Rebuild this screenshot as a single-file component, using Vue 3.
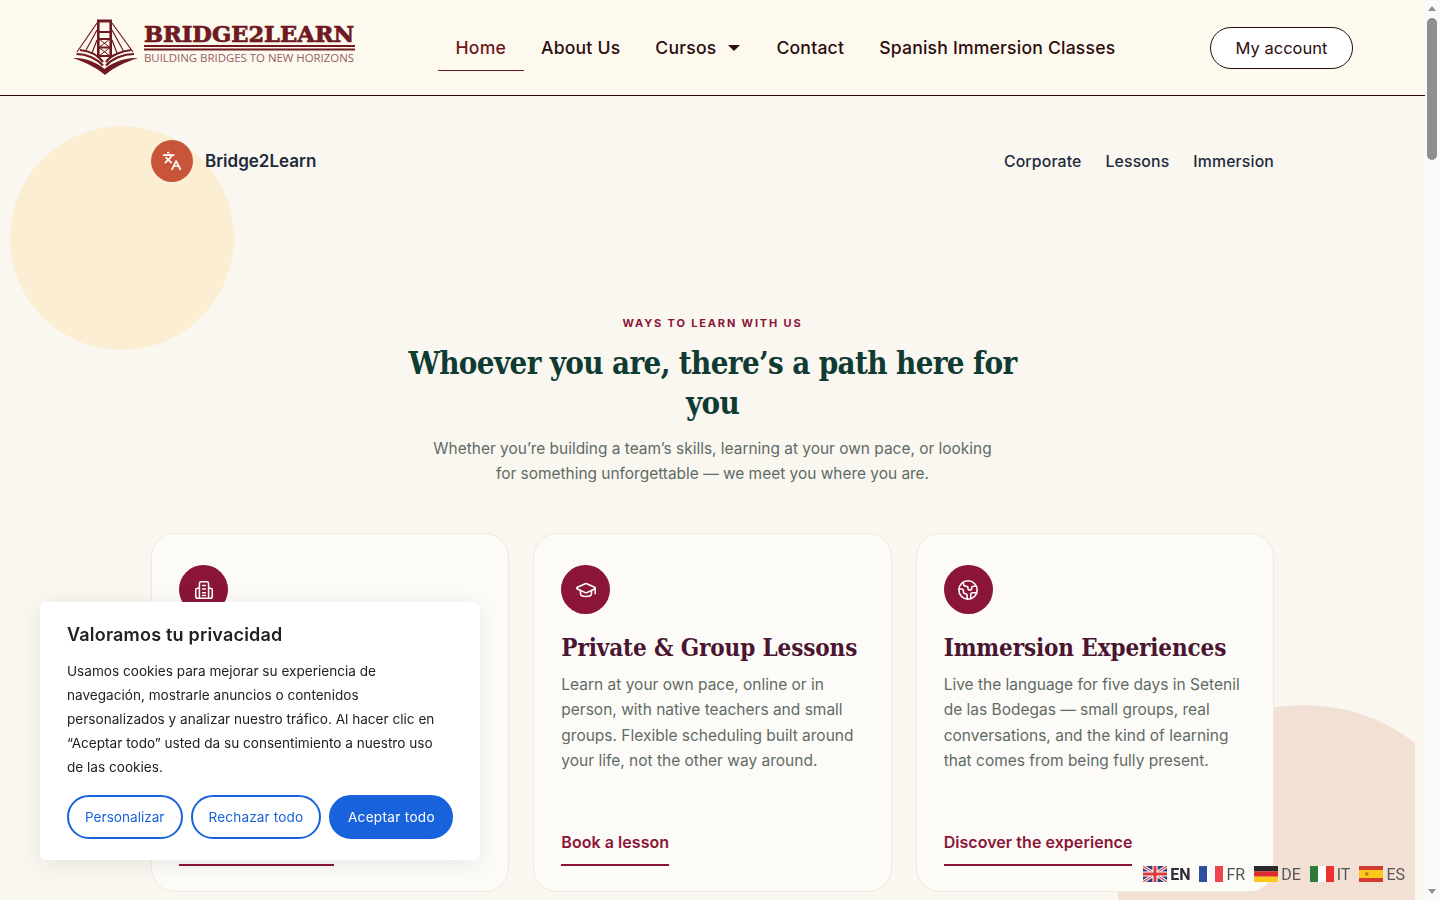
<template>
  <div class="page">
    <header class="site-header">
      <a class="logo" href="#">
        <svg class="logo-mark" width="66" height="60" viewBox="0 0 66 60" fill="none" stroke="#6e1a20">
          <path d="M24 3H39" stroke-width="3" />
          <path d="M25.3 2V40M37.7 2V40" stroke-width="2.6" />
          <path d="M25 14H38M25 21H38M25 29.5H38M25 38H38" stroke-width="1.8" />
          <path d="M26 21L37 29.5M37 21L26 29.5M26 29.5L37 38M37 29.5L26 38" stroke-width="1" />
          <path d="M24 5L4 34M24 12L12 34M24 22L19 35M39 5L60 34M39 12L51 34M39 22L44 35" stroke-width="1.2" />
          <path d="M0 40C12 39 25 45 31.5 51C38 45 52 39 65 40C53 44 41 49 32 57C23 49 11 44 0 40Z" fill="#6e1a20" stroke="none" />
          <path d="M3.5 36C14 36 24 41 30 47.5M61 36C50 36 39 41 33 47.5M7 32C16 33 25 37 30 44M58 32C49 33 38 37 33 44" stroke-width="2.2" />
        </svg>
        <svg class="logo-type" width="212" height="54" viewBox="0 0 212 54">
          <text x="0" y="24" class="logo-name" textLength="210" lengthAdjust="spacingAndGlyphs">BRIDGE2LEARN</text>
          <rect x="0" y="27" width="211" height="2" fill="#6e1a20" />
          <rect x="0" y="30.5" width="211" height="2" fill="#6e1a20" />
          <text x="0" y="44" class="logo-tag" textLength="210" lengthAdjust="spacingAndGlyphs">BUILDING BRIDGES TO NEW HORIZONS</text>
        </svg>
      </a>
      <nav class="main-nav">
        <a class="nav-link active" href="#">Home</a>
        <a class="nav-link" href="#">About Us</a>
        <a class="nav-link" href="#">Cursos<span class="caret"></span></a>
        <a class="nav-link" href="#">Contact</a>
        <a class="nav-link" href="#">Spanish Immersion Classes</a>
      </nav>
      <a class="account" href="#">My account</a>
    </header>

    <main class="ways">
      <span class="blob blob-sun"></span>
      <span class="blob blob-peach"></span>
      <div class="container">
        <div class="subnav">
          <div class="brand">
            <span class="brand-icon">
              <svg width="20" height="20" viewBox="0 0 24 24" fill="none" stroke="#fff" stroke-width="2" stroke-linecap="round" stroke-linejoin="round">
                <path d="m5 8 6 6" /><path d="m4 14 6-6 2-3" /><path d="M2 5h12" /><path d="M7 2h1" />
                <path d="m22 22-5-10-5 10" /><path d="M14 18h6" />
              </svg>
            </span>
            <span class="brand-name">Bridge2Learn</span>
          </div>
          <div class="subnav-links">
            <a href="#">Corporate</a>
            <a href="#">Lessons</a>
            <a href="#">Immersion</a>
          </div>
        </div>

        <div class="intro">
          <p class="eyebrow">WAYS TO LEARN WITH US</p>
          <h1>Whoever you are, there’s a path here for you</h1>
          <p class="lead">Whether you’re building a team’s skills, learning at your own pace, or looking for something unforgettable — we meet you where you are.</p>
        </div>

        <div class="cards">
          <article v-for="card in cards" :key="card.title" class="card">
            <span class="card-icon">
              <svg width="22" height="22" viewBox="0 0 24 24" fill="none" stroke="#fff" stroke-width="1.7" stroke-linecap="round" stroke-linejoin="round">
                <path v-for="d in card.icon" :key="d" :d="d" />
              </svg>
            </span>
            <h2>{{ card.title }}</h2>
            <p>{{ card.text }}</p>
            <a class="card-link" href="#">{{ card.link }}</a>
          </article>
        </div>
      </div>
    </main>

    <section class="cookie">
      <h3>Valoramos tu privacidad</h3>
      <p>Usamos cookies para mejorar su experiencia de navegación, mostrarle anuncios o contenidos personalizados y analizar nuestro tráfico. Al hacer clic en “Aceptar todo” usted da su consentimiento a nuestro uso de las cookies.</p>
      <div class="cookie-actions">
        <button class="ck-btn">Personalizar</button>
        <button class="ck-btn">Rechazar todo</button>
        <button class="ck-btn solid">Aceptar todo</button>
      </div>
    </section>

    <div class="langs">
      <a class="lang current" href="#">
        <svg width="24" height="16" viewBox="0 0 24 16">
          <rect width="24" height="16" fill="#2b3f7e" />
          <path d="M0 0L24 16M24 0L0 16" stroke="#fff" stroke-width="3.2" />
          <path d="M0 0L24 16M24 0L0 16" stroke="#d8393f" stroke-width="1.1" />
          <path d="M12 0V16M0 8H24" stroke="#fff" stroke-width="5.2" />
          <path d="M12 0V16M0 8H24" stroke="#d8393f" stroke-width="3" />
        </svg>EN
      </a>
      <a class="lang" href="#">
        <svg width="24" height="16" viewBox="0 0 24 16"><rect width="8" height="16" fill="#2c4f9e" /><rect x="8" width="8" height="16" fill="#fff" /><rect x="16" width="8" height="16" fill="#ee4450" /></svg>FR
      </a>
      <a class="lang" href="#">
        <svg width="24" height="16" viewBox="0 0 24 16"><rect width="24" height="5.4" fill="#2b2b2b" /><rect y="5.3" width="24" height="5.4" fill="#dd2c2c" /><rect y="10.7" width="24" height="5.3" fill="#fbc91a" /></svg>DE
      </a>
      <a class="lang" href="#">
        <svg width="24" height="16" viewBox="0 0 24 16"><rect width="8" height="16" fill="#2f7a35" /><rect x="8" width="8" height="16" fill="#fff" /><rect x="16" width="8" height="16" fill="#ee3030" /></svg>IT
      </a>
      <a class="lang" href="#">
        <svg width="24" height="16" viewBox="0 0 24 16"><rect width="24" height="16" fill="#d23a33" /><rect y="4" width="24" height="8" fill="#fbc91a" /><rect x="6" y="6.3" width="3.4" height="3.4" rx="1" fill="#c9772a" /></svg>ES
      </a>
    </div>

    <div class="scrollbar">
      <span class="arrow up"></span>
      <span class="thumb"></span>
      <span class="arrow down"></span>
    </div>
  </div>
</template>

<script setup>
const cards = [
  {
    title: 'Corporate Training',
    text: 'Language programmes for teams and companies, shaped around your goals, your industry and the way your people work.',
    link: 'Train your company',
    icon: [
      'M7 21V5a2 2 0 0 1 2-2h6a2 2 0 0 1 2 2v16',
      'M7 10H5a2 2 0 0 0-2 2v7a2 2 0 0 0 2 2h14a2 2 0 0 0 2-2v-7a2 2 0 0 0-2-2h-2',
      'M10.5 7h3M10.5 11h3M10.5 15h3M10.5 18h3',
    ],
  },
  {
    title: 'Private & Group Lessons',
    text: 'Learn at your own pace, online or in person, with native teachers and small groups. Flexible scheduling built around your life, not the other way around.',
    link: 'Book a lesson',
    icon: [
      'M21.42 10.922a1 1 0 0 0-.019-1.838L12.83 5.18a2 2 0 0 0-1.66 0L2.6 9.08a1 1 0 0 0 0 1.832l8.57 3.908a2 2 0 0 0 1.66 0z',
      'M22 10v6',
      'M6 12.5V16a6 3 0 0 0 12 0v-3.5',
    ],
  },
  {
    title: 'Immersion Experiences',
    text: 'Live the language for five days in Setenil de las Bodegas — small groups, real conversations, and the kind of learning that comes from being fully present.',
    link: 'Discover the experience',
    icon: [
      'M12 2a10 10 0 1 0 0 20a10 10 0 0 0 0-20z',
      'M21.54 15H17a2 2 0 0 0-2 2v4.54',
      'M7 3.34V5a3 3 0 0 0 3 3a2 2 0 0 1 2 2c0 1.1.9 2 2 2a2 2 0 0 0 2-2c0-1.1.9-2 2-2h3.17',
      'M11 21.95V18a2 2 0 0 0-2-2a2 2 0 0 1-2-2v-1a2 2 0 0 0-2-2H2.05',
    ],
  },
]
</script>

<style scoped>
.page {
  font-family: "Inter", "Noto Sans", sans-serif;
  width: 1425px;
  background: #faf6f0;
}

.site-header {
  height: 95px;
  background: #fef9ef;
  border-bottom: 1px solid #2b0d0d;
  display: flex;
  align-items: center;
  padding: 0 72px 0 73px;
}

.logo {
  display: flex;
  align-items: flex-start;
  gap: 5px;
  width: 365px;
  height: 60px;
  flex: none;
  margin-top: 1px;
}

.logo-mark,
.logo-type {
  flex: none;
}

.logo-name {
  font-family: "DejaVu Serif Condensed", "DejaVu Serif", serif;
  font-weight: 700;
  font-size: 23px;
  fill: #6e1a20;
  stroke: #6e1a20;
  stroke-width: 0.7px;
}

.logo-tag {
  font-family: "Open Sans", sans-serif;
  font-size: 11px;
  fill: #935f60;
}

.main-nav {
  display: flex;
  align-items: center;
  height: 46px;
}

.nav-link {
  font-size: 17.6px;
  font-weight: 500;
  letter-spacing: 0.2px;
  color: #2b0d0d;
  text-decoration: none;
  padding: 1px 17.5px 0;
  height: 46px;
  box-sizing: border-box;
  display: flex;
  align-items: center;
  border-bottom: 1px solid transparent;
}

.nav-link.active {
  color: #6e1a20;
  border-bottom-color: #6e1a20;
}

.caret {
  width: 0;
  height: 0;
  margin-left: 12px;
  margin-right: 1px;
  border-left: 6.5px solid transparent;
  border-right: 6.5px solid transparent;
  border-top: 6.5px solid #2b0d0d;
}

.account {
  margin-left: auto;
  width: 143px;
  height: 42px;
  box-sizing: border-box;
  border: 1px solid #2b0d0d;
  border-radius: 21px;
  background: #fff;
  color: #2b0d0d;
  font-size: 16.5px;
  text-decoration: none;
  display: flex;
  align-items: center;
  justify-content: center;
}

.ways {
  position: relative;
  width: 1415px;
  height: 804px;
  overflow: hidden;
}

.blob {
  position: absolute;
  border-radius: 50%;
}

.blob-sun {
  left: 10px;
  top: 30px;
  width: 224px;
  height: 224px;
  background: #fbeed2;
}

.blob-peach {
  left: 1118px;
  top: 609px;
  width: 370px;
  height: 370px;
  background: #f3e0d5;
}

.container {
  position: relative;
  width: 1123px;
  margin-left: 151px;
}

.subnav {
  display: flex;
  align-items: center;
  justify-content: space-between;
  padding-top: 44px;
}

.brand {
  display: flex;
  align-items: center;
  gap: 12px;
}

.brand-icon {
  width: 42px;
  height: 42px;
  border-radius: 50%;
  background: #c8553a;
  display: flex;
  align-items: center;
  justify-content: center;
}

.brand-name {
  font-size: 17px;
  font-weight: 600;
  color: #1d2a3a;
}

.subnav-links {
  display: flex;
  gap: 24px;
}

.subnav-links a {
  font-size: 15.8px;
  font-weight: 500;
  letter-spacing: 0.15px;
  color: #1d2a3a;
  text-decoration: none;
}

.intro {
  text-align: center;
  margin-top: 133px;
}

.eyebrow {
  margin: 0;
  font-size: 11px;
  line-height: 16px;
  font-weight: 700;
  letter-spacing: 1.85px;
  color: #8a1538;
}

h1 {
  width: 640px;
  margin: 12px auto 0;
  font-family: "DejaVu Serif Condensed", "DejaVu Serif", serif;
  font-weight: 700;
  font-size: 31px;
  line-height: 40px;
  letter-spacing: -0.63px;
  color: #0f3b33;
}

.lead {
  width: 580px;
  margin: 13px auto 0;
  font-size: 15.45px;
  line-height: 25px;
  color: #5f6b66;
}

.cards {
  display: grid;
  grid-template-columns: repeat(3, minmax(0, 1fr));
  gap: 24px;
  margin-top: 47px;
}

.card {
  box-sizing: border-box;
  height: 359px;
  padding: 31px 27px 0;
  background: #fdfbf7;
  border: 1px solid #f0e9df;
  border-radius: 24px;
  display: flex;
  flex-direction: column;
  align-items: flex-start;
}

.card-icon {
  width: 49px;
  height: 49px;
  border-radius: 50%;
  background: #8a1538;
  display: flex;
  align-items: center;
  justify-content: center;
  flex: none;
}

.card h2 {
  margin: 18px 0 0;
  font-family: "DejaVu Serif Condensed", "DejaVu Serif", serif;
  font-size: 24px;
  line-height: 31px;
  font-weight: 700;
  letter-spacing: -0.12px;
  color: #4a1530;
  white-space: nowrap;
}

.card p {
  margin: 9px 0 0;
  font-size: 15.5px;
  line-height: 25.4px;
  color: #5f6b66;
}

.card-link {
  margin-top: auto;
  margin-bottom: 25px;
  padding-bottom: 12px;
  border-bottom: 2px solid #8a1538;
  font-size: 16px;
  font-weight: 600;
  letter-spacing: 0.05px;
  line-height: 20px;
  color: #8a1538;
  text-decoration: none;
}

.cookie {
  position: fixed;
  left: 40px;
  top: 602px;
  width: 440px;
  height: 258px;
  box-sizing: border-box;
  padding: 22px 27px 0;
  background: #fff;
  border-radius: 6px;
  box-shadow: 0 4px 24px rgba(0, 0, 0, 0.08);
}

.cookie h3 {
  margin: 0;
  font-size: 18px;
  line-height: 22px;
  font-weight: 600;
  letter-spacing: 0.2px;
  color: #212121;
}

.cookie p {
  max-width: 380px;
  margin: 13px 0 0;
  font-size: 13.6px;
  line-height: 24px;
  color: #212121;
}

.cookie-actions {
  display: flex;
  gap: 8px;
  margin-top: 16px;
}

.ck-btn {
  height: 44px;
  padding: 0 16px;
  border: 2px solid #1863dc;
  border-radius: 22px;
  background: #fff;
  color: #1863dc;
  font-family: inherit;
  font-size: 13.6px;
  white-space: nowrap;
}

.ck-btn + .ck-btn {
  padding: 0 16px;
  letter-spacing: 0.15px;
}

.ck-btn.solid {
  padding: 0 16.5px;
  letter-spacing: 0.3px;
  background: #1863dc;
  color: #fff;
}

.langs {
  position: fixed;
  right: 35px;
  top: 865px;
  display: flex;
  gap: 9px;
  font-family: "Roboto", sans-serif;
  font-size: 16px;
}

.lang {
  display: flex;
  align-items: center;
  gap: 3px;
  color: #555;
  text-decoration: none;
  height: 18px;
}

.lang.current {
  color: #2b2b3a;
  font-weight: 700;
}

.scrollbar {
  position: fixed;
  right: 0;
  top: 0;
  bottom: 0;
  width: 15px;
  background: #fafafa;
}

.thumb {
  position: absolute;
  left: 2px;
  top: 18px;
  width: 10px;
  height: 142px;
  border-radius: 5px;
  background: #8f8f8f;
}

.arrow {
  position: absolute;
  left: 3px;
  width: 0;
  height: 0;
  border-left: 4.5px solid transparent;
  border-right: 4.5px solid transparent;
}

.arrow.up {
  top: 6px;
  border-bottom: 5px solid #8f8f8f;
}

.arrow.down {
  bottom: 6px;
  border-top: 5px solid #8f8f8f;
}
</style>

<style>
html,
body {
  margin: 0;
  overflow: hidden;
  background: #faf6f0;
}
</style>
